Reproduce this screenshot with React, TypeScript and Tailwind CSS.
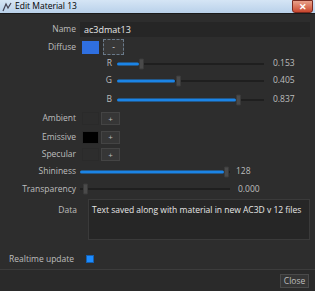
import React from "react";

function Slider({ left, fill, handle, end }: { left: number; fill: number; handle: number; end: number }) {
  return (
    <div className="relative h-full" style={{ width: end - left }}>
      <div className="absolute top-1/2 left-0 right-0 h-[2px] -translate-y-1/2 bg-[#1f1f1f]" />
      {fill > 0 && (
        <div className="absolute top-1/2 left-0 h-[3px] -translate-y-1/2 rounded-sm bg-[#1b84e6]" style={{ width: fill - left }} />
      )}
      <div
        className="absolute top-1/2 h-[11px] w-[5px] -translate-y-1/2 rounded-[1px] bg-[#4a4a4a] border border-[#3a3a3a]"
        style={{ left: handle - left }}
      />
    </div>
  );
}

export default function App() {
  const font = { fontFamily: '"Open Sans", "Noto Sans", sans-serif' };
  const label = "w-[76px] shrink-0 text-right text-[#bdbdbd]";
  return (
    <div className="relative w-[315px] h-[291px] bg-[#2d2d2d] overflow-hidden text-[8.5px] leading-none" style={font}>
      {/* title bar */}
      <div className="h-[14px] flex items-center bg-gradient-to-b from-[#d5e5f5] to-[#b9d1ea] border-b border-[#1a1a1a] relative">
        <div className="w-[12px] h-[12px] flex items-center justify-center ml-[1px]">
          <svg width="10" height="10" viewBox="0 0 10 10">
            <path d="M1 9 L4 2 L6 6 L9 1" stroke="#445" strokeWidth="1.2" fill="none" />
          </svg>
        </div>
        <span className="ml-[2px] text-[8.5px] text-black">Edit Material 13</span>
        <div className="absolute right-[2px] top-0 h-[13px] w-[21px] rounded-b-[3px] bg-gradient-to-b from-[#e8a08a] to-[#c9452c] border border-[#7a2a20] flex items-center justify-center">
          <span className="text-white text-[9px] font-bold leading-none">✕</span>
        </div>
      </div>

      <div className="flex flex-col pt-[6px]">
        {/* Name */}
        <div className="h-[18px] flex items-center">
          <div className={label}>Name</div>
          <div className="ml-[4px] w-[230px] h-[15px] bg-[#262626] flex items-center pl-[4px] text-[#e6e6e6] text-[9px]">ac3dmat13</div>
        </div>
        {/* Diffuse */}
        <div className="h-[18px] flex items-center">
          <div className={label}>Diffuse</div>
          <div className="ml-[6px] w-[17px] h-[13px] bg-[#2f6fe0]" />
          <div className="ml-[4px] w-[21px] h-[16px] border border-dashed border-[#6a7a8a] bg-[#383838] flex items-center justify-center text-[#ddd]">-</div>
        </div>
        {/* RGB */}
        {[
          { l: "R", fill: 140, handle: 140, v: "0.153", h: "h-[15px]" },
          { l: "G", fill: 176, handle: 177, v: "0.405", h: "h-[19px]" },
          { l: "B", fill: 237, handle: 237, v: "0.837", h: "h-[19px]" },
        ].map((r) => (
          <div key={r.l} className={`${r.h} flex items-center`}>
            <div className="w-[113px] shrink-0 text-right text-[#bdbdbd] pr-[1px]">{r.l}</div>
            <div className="ml-[4px] h-full">
              <Slider left={118} fill={r.fill} handle={r.handle} end={265} />
            </div>
            <div className="ml-[9px] text-[#bdbdbd]">{r.v}</div>
          </div>
        ))}
        {/* Ambient etc */}
        {[
          { l: "Ambient", c: "bg-[#2d2d2d]", h: "h-[19px]" },
          { l: "Emissive", c: "bg-black", h: "h-[18px]" },
          { l: "Specular", c: "bg-[#2d2d2d]", h: "h-[17px]" },
        ].map((r) => (
          <div key={r.l} className={`${r.h} flex items-center`}>
            <div className={label}>{r.l}</div>
            <div className={`ml-[6px] w-[17px] h-[13px] ${r.c} border border-[#2a2a2a]`} />
            <div className="ml-[2px] w-[19px] h-[13px] border border-[#444] bg-[#363636] flex items-center justify-center text-[#bbb] text-[8px]">+</div>
          </div>
        ))}
        {/* Shininess */}
        <div className="h-[17px] flex items-center">
          <div className={label}>Shininess</div>
          <div className="ml-[4px] h-full">
            <Slider left={80} fill={224} handle={224} end={230} />
          </div>
          <div className="ml-[6px] text-[#bdbdbd]">128</div>
        </div>
        {/* Transparency */}
        <div className="h-[18px] flex items-center">
          <div className={label}>Transparency</div>
          <div className="ml-[4px] h-full">
            <Slider left={80} fill={0} handle={83} end={230} />
          </div>
          <div className="ml-[8px] text-[#bdbdbd]">0.000</div>
        </div>
        {/* Data */}
        <div className="flex mt-[1px]">
          <div className="w-[77px] shrink-0 text-right text-[#bdbdbd] pt-[7px]">Data</div>
          <div className="ml-[11px] w-[222px] h-[41px] bg-[#262626] border border-[#3a3a3a] pl-[3px] pt-[6px] text-[#e6e6e6] whitespace-nowrap">
            Text saved along with material in new AC3D v 12 files
          </div>
        </div>
        {/* Realtime */}
        <div className="h-[16px] mt-[11px] flex items-center">
          <div className="ml-[9px] w-[72px] text-[#bdbdbd]">Realtime update</div>
          <div className="ml-[5px] w-[8px] h-[8px] bg-[#1d8cff] border border-[#145fb0]" />
        </div>
      </div>
      {/* footer */}
      <div className="absolute left-0 right-0 top-[269px] h-[1px] bg-[#3c3c3c]" />
      <div className="absolute left-0 right-0 top-[270px] bottom-0 bg-[#2a2a2a] flex justify-end items-start pt-[4px] pr-[6px]">
        <div className="w-[29px] h-[14px] border border-[#4a4a4a] bg-[#353535] flex items-center justify-center text-[#bdbdbd]">Close</div>
      </div>
    </div>
  );
}
